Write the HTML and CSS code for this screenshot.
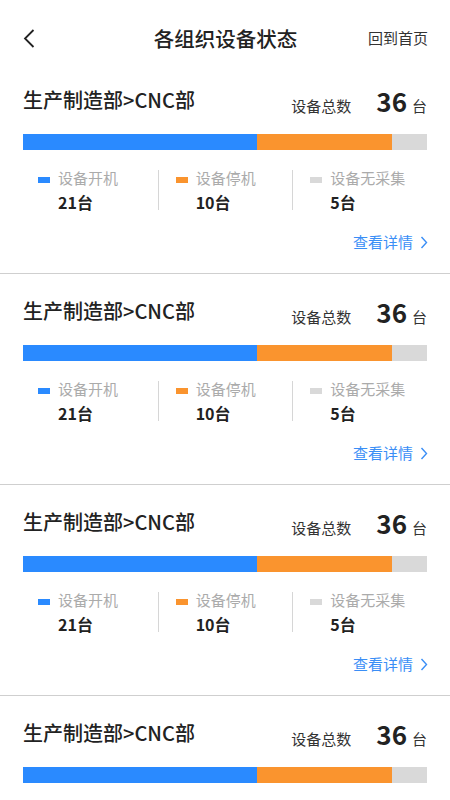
FILE: index.html
```html
<!DOCTYPE html>
<html lang="zh-CN">
<head>
<meta charset="utf-8">
<link rel="stylesheet" href="styles.css">
</head>
<body>
<header class="topbar">
  <svg class="back" width="12" height="19" viewBox="0 0 12 19"><polyline points="10.5,1 2,9.5 10.5,18" fill="none" stroke="#222" stroke-width="1.8"/></svg>
  <h1 class="page-title">各组织设备状态</h1>
  <span class="home">回到首页</span>
</header>
<main class="list">
  <section class="card">
    <div class="card-head">
      <span class="org">生产制造部&gt;CNC部</span>
      <span class="total"><span class="total-label">设备总数</span><b class="total-num">36</b><span class="unit">台</span></span>
    </div>
    <div class="bar"><span class="seg seg-on"></span><span class="seg seg-off"></span><span class="seg seg-none"></span></div>
    <div class="legend">
      <div class="leg"><div class="leg-label"><i class="sq sq-on"></i>设备开机</div><div class="leg-num">21台</div></div>
      <div class="leg"><div class="leg-label"><i class="sq sq-off"></i>设备停机</div><div class="leg-num">10台</div></div>
      <div class="leg"><div class="leg-label"><i class="sq sq-none"></i>设备无采集</div><div class="leg-num">5台</div></div>
    </div>
    <div class="more">查看详情<svg class="chev" width="8" height="13" viewBox="0 0 8 13"><polyline points="1.5,1 6.5,6.5 1.5,12" fill="none" stroke="#3a8ef6" stroke-width="1.4"/></svg></div>
  </section>
  <section class="card">
    <div class="card-head">
      <span class="org">生产制造部&gt;CNC部</span>
      <span class="total"><span class="total-label">设备总数</span><b class="total-num">36</b><span class="unit">台</span></span>
    </div>
    <div class="bar"><span class="seg seg-on"></span><span class="seg seg-off"></span><span class="seg seg-none"></span></div>
    <div class="legend">
      <div class="leg"><div class="leg-label"><i class="sq sq-on"></i>设备开机</div><div class="leg-num">21台</div></div>
      <div class="leg"><div class="leg-label"><i class="sq sq-off"></i>设备停机</div><div class="leg-num">10台</div></div>
      <div class="leg"><div class="leg-label"><i class="sq sq-none"></i>设备无采集</div><div class="leg-num">5台</div></div>
    </div>
    <div class="more">查看详情<svg class="chev" width="8" height="13" viewBox="0 0 8 13"><polyline points="1.5,1 6.5,6.5 1.5,12" fill="none" stroke="#3a8ef6" stroke-width="1.4"/></svg></div>
  </section>
  <section class="card">
    <div class="card-head">
      <span class="org">生产制造部&gt;CNC部</span>
      <span class="total"><span class="total-label">设备总数</span><b class="total-num">36</b><span class="unit">台</span></span>
    </div>
    <div class="bar"><span class="seg seg-on"></span><span class="seg seg-off"></span><span class="seg seg-none"></span></div>
    <div class="legend">
      <div class="leg"><div class="leg-label"><i class="sq sq-on"></i>设备开机</div><div class="leg-num">21台</div></div>
      <div class="leg"><div class="leg-label"><i class="sq sq-off"></i>设备停机</div><div class="leg-num">10台</div></div>
      <div class="leg"><div class="leg-label"><i class="sq sq-none"></i>设备无采集</div><div class="leg-num">5台</div></div>
    </div>
    <div class="more">查看详情<svg class="chev" width="8" height="13" viewBox="0 0 8 13"><polyline points="1.5,1 6.5,6.5 1.5,12" fill="none" stroke="#3a8ef6" stroke-width="1.4"/></svg></div>
  </section>
  <section class="card">
    <div class="card-head">
      <span class="org">生产制造部&gt;CNC部</span>
      <span class="total"><span class="total-label">设备总数</span><b class="total-num">36</b><span class="unit">台</span></span>
    </div>
    <div class="bar"><span class="seg seg-on"></span><span class="seg seg-off"></span><span class="seg seg-none"></span></div>
  </section>
</main>
</body>
</html>
```

FILE: styles.css
```css
* { box-sizing: border-box; }
html, body { margin: 0; padding: 0; }
body {
  width: 450px;
  height: 800px;
  overflow: hidden;
  background: #fff;
  color: #222;
  font-family: "Noto Sans CJK SC", "Noto Sans", sans-serif;
}
.topbar {
  display: grid;
  grid-template-columns: 1fr auto 1fr;
  align-items: center;
  height: 63px;
  padding: 13px 22px 0 23px;
}
.back { display: block; }
.page-title {
  margin: 0;
  font-size: 20.5px;
  font-weight: 500;
  line-height: 28px;
  color: #222;
}
.home {
  justify-self: end;
  font-size: 15px;
  line-height: 20px;
  color: #333;
}
.card {
  padding: 22px 23px 21px 23px;
  border-bottom: 1px solid #cfcfcf;
}
.card-head {
  display: flex;
  align-items: center;
  justify-content: space-between;
  height: 30px;
}
.org {
  font-size: 20px;
  font-weight: 500;
  line-height: 30px;
  color: #222;
}
.total {
  display: flex;
  align-items: baseline;
}
.total-label {
  font-size: 15px;
  color: #333;
}
.total-num {
  font-size: 26px;
  font-weight: 700;
  margin-left: 25px;
  color: #222;
}
.unit {
  font-size: 15px;
  margin-left: 5px;
  color: #333;
}
.bar {
  display: flex;
  height: 16px;
  margin-top: 19px;
}
.seg { display: block; height: 100%; }
.seg-on { width: 58%; background: #2a8aff; }
.seg-off { width: 33.4%; background: #fa942e; }
.seg-none { flex: 1; background: #d9d9d9; }
.legend {
  display: grid;
  grid-template-columns: 1fr 1fr 1fr;
  margin-top: 20px;
}
.leg {
  padding-left: 17px;
  height: 40px;
}
.leg:first-child { padding-left: 15px; }
.leg + .leg { border-left: 1px solid #d6d6d6; }
.leg-label {
  display: flex;
  align-items: center;
  font-size: 15px;
  line-height: 16px;
  color: #ababab;
  white-space: nowrap;
}
.sq {
  display: inline-block;
  width: 12px;
  height: 6px;
  margin-right: 8px;
  margin-top: 4px;
}
.sq-on { background: #2a8aff; }
.sq-off { background: #fa942e; }
.sq-none { background: #d9d9d9; }
.leg-num {
  margin-top: 7px;
  margin-left: 20px;
  font-size: 16px;
  font-weight: 700;
  line-height: 18px;
  color: #222;
}
.more {
  display: flex;
  align-items: center;
  justify-content: flex-end;
  margin-top: 22px;
  font-size: 15px;
  line-height: 20px;
  color: #3a8ef6;
}
.chev { margin-left: 7px; margin-right: -1px; }
```
